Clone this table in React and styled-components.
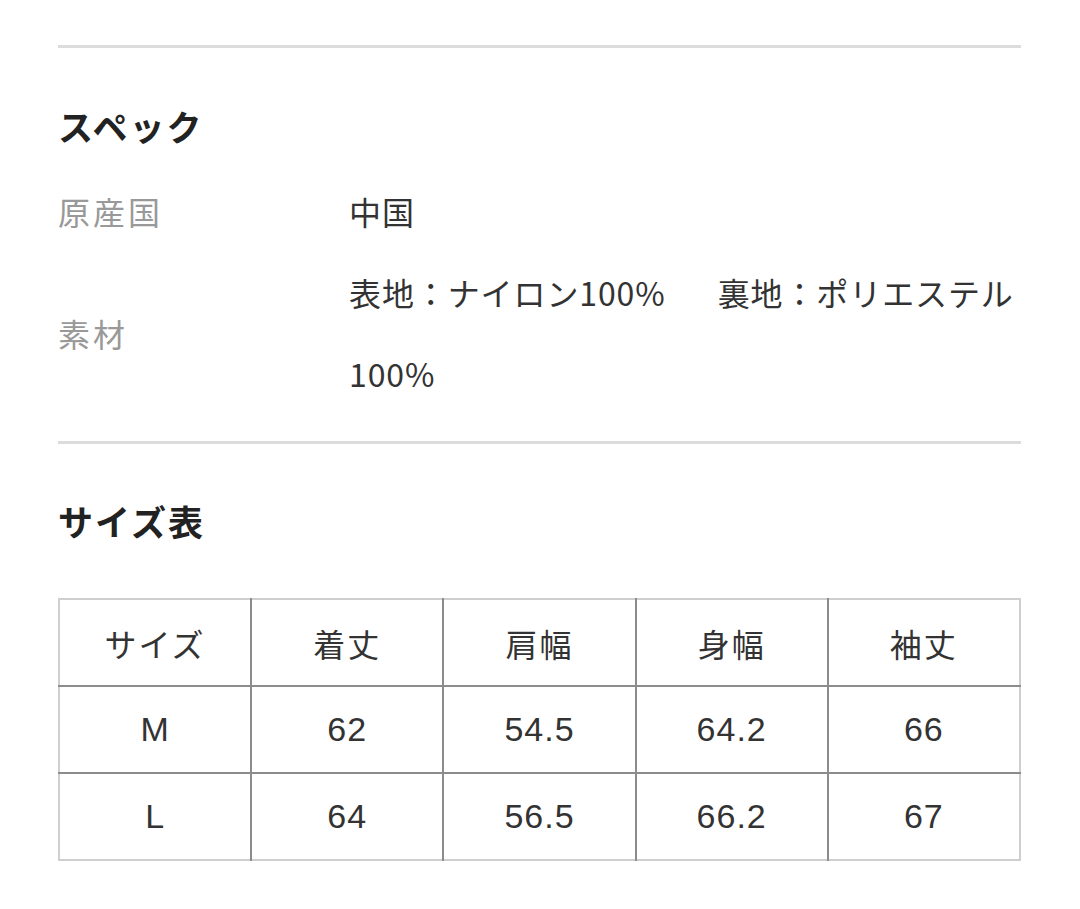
import React from "react";
import styled, { createGlobalStyle } from "styled-components";

const GlobalStyle = createGlobalStyle`
  body {
    margin: 0;
    background: #fff;
    font-family: "Noto Sans CJK JP", "Noto Sans", sans-serif;
    color: #333;
  }
`;

const Page = styled.div`
  padding: 45px 59px 40px 58px;
`;

const Divider = styled.hr`
  margin: 0;
  border: none;
  height: 3px;
  background: #dcdcdc;
`;

const Heading = styled.h2`
  margin: ${(p) => p.$top}px 0 0;
  font-size: 35px;
  line-height: 51px;
  font-weight: 700;
  letter-spacing: 2px;
  color: #222;
`;

const SpecList = styled.dl`
  margin: 20px 0 27px;
  display: grid;
  grid-template-columns: 291px 1fr;
  align-items: center;
`;

const Label = styled.dt`
  font-size: 32px;
  letter-spacing: 3px;
  color: #999;
  line-height: 81px;
`;

const Value = styled.dd`
  margin: 0;
  font-size: 32px;
  letter-spacing: 0.9px;
  line-height: 81px;
  color: #333;
`;

const Line = styled.div`
  display: flex;
  gap: 52px;
  white-space: nowrap;
`;

const Table = styled.table`
  margin-top: 52px;
  width: 100%;
  border-collapse: collapse;
  table-layout: fixed;
  border: 2px solid #cfcfcf;
`;

const Cell = styled.td`
  height: 85px;
  padding: 0;
  text-align: center;
  vertical-align: middle;
  border-right: 2px solid #8c8c8c;
  border-bottom: 2px solid #8c8c8c;
  color: #333;
  font-size: ${(p) => (p.$num ? "34px" : "32px")};
  letter-spacing: ${(p) => (p.$num ? "1px" : "2px")};
  font-family: ${(p) =>
    p.$num
      ? `"Liberation Sans", Arial, sans-serif`
      : `"Noto Sans CJK JP", sans-serif`};

  tr:last-child > & {
    border-bottom: none;
  }
  &:last-child {
    border-right: none;
  }
`;

const header = ["サイズ", "着丈", "肩幅", "身幅", "袖丈"];
const rows = [
  ["M", "62", "54.5", "64.2", "66"],
  ["L", "64", "56.5", "66.2", "67"],
];

export default function App() {
  return (
    <Page>
      <GlobalStyle />
      <Divider />
      <Heading $top={52}>スペック</Heading>
      <SpecList>
        <Label>原産国</Label>
        <Value>中国</Value>
        <Label>素材</Label>
        <Value>
          <Line>
            <span>表地：ナイロン100%</span>
            <span>裏地：ポリエステル</span>
          </Line>
          <Line>100%</Line>
        </Value>
      </SpecList>
      <Divider />
      <Heading $top={51}>サイズ表</Heading>
      <Table>
        <tbody>
          <tr>
            {header.map((h) => (
              <Cell key={h}>{h}</Cell>
            ))}
          </tr>
          {rows.map((r) => (
            <tr key={r[0]}>
              {r.map((c, i) => (
                <Cell key={i} $num>
                  {c}
                </Cell>
              ))}
            </tr>
          ))}
        </tbody>
      </Table>
    </Page>
  );
}
